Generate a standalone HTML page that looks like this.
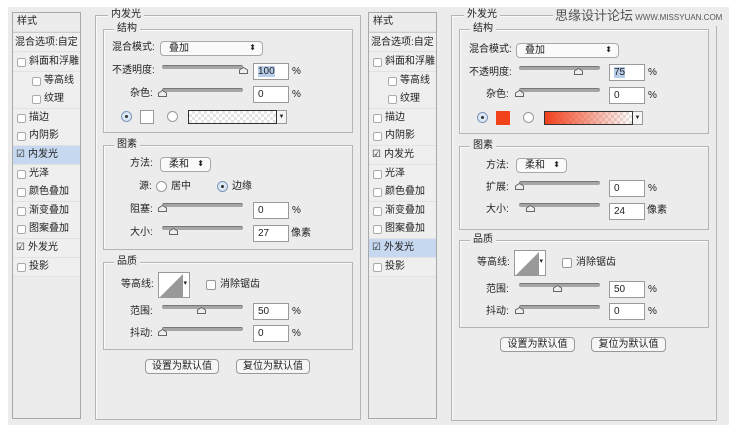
<!DOCTYPE html>
<html><head><meta charset="utf-8"><style>
*{margin:0;padding:0;box-sizing:border-box}
body{width:729px;height:433px;background:#fff;position:relative;overflow:hidden;font-family:"Liberation Sans","Noto Sans CJK SC",sans-serif;font-size:10px;color:#222}
.bg{position:absolute;left:8px;top:7px;width:721px;height:418px;background:#ececec}
.a{position:absolute}
.t{position:absolute;line-height:12px;white-space:nowrap;font-size:10px}
.side{position:absolute;border:1px solid #a9a9a9;background:#ececec}
.row{position:absolute;left:0;width:100%;height:19px;border-bottom:1px solid #e2e2e2;background:#efefef}
.row span{position:absolute;top:3px;line-height:12px}
.cb{position:absolute;width:9px;height:9px;border:1px solid #aaa;border-radius:2px;background:#fff;top:5px}
.hl{background:#c6d9f0}
.grp{position:absolute;border:1px solid #b5b5b5;box-shadow:inset 1px 1px 0 #fafafa}
.lab{position:absolute;top:-7px;background:#ececec;padding:0 3px;line-height:12px}
.inp{position:absolute;width:36px;height:17px;background:#fff;border:1px solid #9a9a9a;padding:2px 4px;line-height:12px;font-size:10px}
.sl{position:absolute;height:4px;border-radius:2px;background:#a5a5a5;border-top:1px solid #777}
.th{position:absolute;width:9px;height:7px}
.sel{position:absolute;height:15px;background:#fafafa;border:1px solid #a8a8a8;border-radius:4px;padding:1px 8px;line-height:12px}
.sel b{position:absolute;right:6px;top:0;font-weight:normal;font-size:8px}
.rad{position:absolute;width:11px;height:11px;border:1px solid #999;border-radius:50%;background:#fff}
.rad.on::after{content:"";position:absolute;left:3px;top:3px;width:3px;height:3px;border-radius:50%;background:#333}
.rad.on{background:#dde8f6;border-color:#7b95b8}
.btn{position:absolute;height:15px;border:1px solid #999;border-radius:4px;background:#f6f6f6;text-align:center;line-height:13px}
.cont{position:absolute;border:1px solid #999;background:#fff}
</style></head><body>
<div class="bg"></div>

<!-- LEFT SIDEBAR -->
<div class="side" style="left:12px;top:12px;width:69px;height:407px">
 <div class="row" style="top:0;height:19px;background:#ececec"><span style="left:4px">样式</span></div>
 <div class="row" style="top:19px;height:20px;border-top:1px solid #ccc"><span style="left:2px;top:4px">混合选项:自定</span></div>
 <div class="row" style="top:40px"><i class="cb" style="left:4px"></i><span style="left:16px">斜面和浮雕</span></div>
 <div class="row" style="top:59px"><i class="cb" style="left:19px"></i><span style="left:31px">等高线</span></div>
 <div class="row" style="top:77px"><i class="cb" style="left:19px"></i><span style="left:31px">纹理</span></div>
 <div class="row" style="top:96px"><i class="cb" style="left:4px"></i><span style="left:16px">描边</span></div>
 <div class="row" style="top:114px"><i class="cb" style="left:4px"></i><span style="left:16px">内阴影</span></div>
 <div class="row hl" style="top:133px"><span style="left:3px">☑</span><span style="left:15px">内发光</span></div>
 <div class="row" style="top:152px"><i class="cb" style="left:4px"></i><span style="left:16px">光泽</span></div>
 <div class="row" style="top:170px"><i class="cb" style="left:4px"></i><span style="left:16px">颜色叠加</span></div>
 <div class="row" style="top:189px"><i class="cb" style="left:4px"></i><span style="left:16px">渐变叠加</span></div>
 <div class="row" style="top:207px"><i class="cb" style="left:4px"></i><span style="left:16px">图案叠加</span></div>
 <div class="row" style="top:226px"><span style="left:3px">☑</span><span style="left:15px">外发光</span></div>
 <div class="row" style="top:245px"><i class="cb" style="left:4px"></i><span style="left:16px">投影</span></div>
</div>

<!-- LEFT MAIN -->
<div class="grp" style="left:95px;top:15px;width:266px;height:405px"><span class="lab" style="left:12px">内发光</span></div>
<div class="grp" style="left:103px;top:29px;width:250px;height:104px"><span class="lab" style="left:10px">结构</span></div>
<span class="t" style="left:112px;top:42px">混合模式:</span>
<div class="sel" style="left:160px;top:41px;width:103px">叠加<b>⬍</b></div>
<span class="t" style="left:112px;top:65px">不透明度:</span>
<div class="sl" style="left:162px;top:65px;width:81px"></div>
<svg class="th" style="left:239px;top:67px" viewBox="0 0 9 7"><path d="M.5 6.5V3L4.5.5 8.5 3v3.5z" fill="#eee" stroke="#666"/></svg>
<div class="inp" style="left:253px;top:63px"><span style="background:#b7cdea">100</span></div><span class="t" style="left:292px;top:66px">%</span>
<span class="t" style="left:130px;top:88px">杂色:</span>
<div class="sl" style="left:162px;top:88px;width:81px"></div>
<svg class="th" style="left:158px;top:90px" viewBox="0 0 9 7"><path d="M.5 6.5V3L4.5.5 8.5 3v3.5z" fill="#eee" stroke="#666"/></svg>
<div class="inp" style="left:253px;top:86px">0</div><span class="t" style="left:292px;top:89px">%</span>
<div class="rad on" style="left:121px;top:111px"></div>
<div class="a" style="left:140px;top:110px;width:14px;height:14px;background:#fff;border:1px solid #999"></div>
<div class="rad" style="left:167px;top:111px"></div>
<div class="a" style="left:188px;top:110px;width:89px;height:14px;border:1px solid #333;background:repeating-conic-gradient(#e4e4e4 0 25%,#fff 0 50%) 0 0/6px 6px"></div>
<div class="a" style="left:277px;top:110px;width:10px;height:14px;border:1px solid #999;border-left:0;background:#f5f5f5;font-size:6px;text-align:center;line-height:12px">▼</div>

<div class="grp" style="left:103px;top:145px;width:250px;height:105px"><span class="lab" style="left:10px">图素</span></div>
<span class="t" style="left:130px;top:158px">方法:</span>
<div class="sel" style="left:160px;top:157px;width:51px">柔和<b>⬍</b></div>
<span class="t" style="left:139px;top:181px">源:</span>
<div class="rad" style="left:156px;top:181px"></div><span class="t" style="left:171px;top:181px">居中</span>
<div class="rad on" style="left:217px;top:181px"></div><span class="t" style="left:232px;top:181px">边缘</span>
<span class="t" style="left:130px;top:204px">阻塞:</span>
<div class="sl" style="left:162px;top:203px;width:81px"></div>
<svg class="th" style="left:158px;top:205px" viewBox="0 0 9 7"><path d="M.5 6.5V3L4.5.5 8.5 3v3.5z" fill="#eee" stroke="#666"/></svg>
<div class="inp" style="left:253px;top:202px">0</div><span class="t" style="left:292px;top:205px">%</span>
<span class="t" style="left:130px;top:227px">大小:</span>
<div class="sl" style="left:162px;top:226px;width:81px"></div>
<svg class="th" style="left:169px;top:228px" viewBox="0 0 9 7"><path d="M.5 6.5V3L4.5.5 8.5 3v3.5z" fill="#eee" stroke="#666"/></svg>
<div class="inp" style="left:253px;top:225px">27</div><span class="t" style="left:291px;top:228px">像素</span>

<div class="grp" style="left:103px;top:262px;width:250px;height:88px"><span class="lab" style="left:10px">品质</span></div>
<span class="t" style="left:121px;top:279px">等高线:</span>
<div class="cont" style="left:158px;top:272px;width:32px;height:26px"><svg width="24" height="24" style="position:absolute;left:0;top:0"><path d="M1 24L24 1V24z" fill="#999"/></svg><span style="position:absolute;right:2px;top:6px;font-size:7px">▾</span></div>
<div class="a" style="left:206px;top:280px;width:10px;height:10px;border:1px solid #999;border-radius:2px;background:#fff"></div>
<span class="t" style="left:220px;top:279px">消除锯齿</span>
<span class="t" style="left:130px;top:306px">范围:</span>
<div class="sl" style="left:162px;top:305px;width:81px"></div>
<svg class="th" style="left:197px;top:307px" viewBox="0 0 9 7"><path d="M.5 6.5V3L4.5.5 8.5 3v3.5z" fill="#eee" stroke="#666"/></svg>
<div class="inp" style="left:253px;top:303px">50</div><span class="t" style="left:292px;top:306px">%</span>
<span class="t" style="left:130px;top:328px">抖动:</span>
<div class="sl" style="left:162px;top:327px;width:81px"></div>
<svg class="th" style="left:158px;top:329px" viewBox="0 0 9 7"><path d="M.5 6.5V3L4.5.5 8.5 3v3.5z" fill="#eee" stroke="#666"/></svg>
<div class="inp" style="left:253px;top:325px">0</div><span class="t" style="left:292px;top:328px">%</span>
<div class="btn" style="left:145px;top:359px;width:74px">设置为默认值</div>
<div class="btn" style="left:236px;top:359px;width:74px">复位为默认值</div>

<!-- RIGHT SIDEBAR -->
<div class="side" style="left:368px;top:12px;width:69px;height:407px">
 <div class="row" style="top:0;height:19px;background:#ececec"><span style="left:4px">样式</span></div>
 <div class="row" style="top:19px;height:20px;border-top:1px solid #ccc"><span style="left:2px;top:4px">混合选项:自定</span></div>
 <div class="row" style="top:40px"><i class="cb" style="left:4px"></i><span style="left:16px">斜面和浮雕</span></div>
 <div class="row" style="top:59px"><i class="cb" style="left:19px"></i><span style="left:31px">等高线</span></div>
 <div class="row" style="top:77px"><i class="cb" style="left:19px"></i><span style="left:31px">纹理</span></div>
 <div class="row" style="top:96px"><i class="cb" style="left:4px"></i><span style="left:16px">描边</span></div>
 <div class="row" style="top:114px"><i class="cb" style="left:4px"></i><span style="left:16px">内阴影</span></div>
 <div class="row" style="top:133px"><span style="left:3px">☑</span><span style="left:15px">内发光</span></div>
 <div class="row" style="top:152px"><i class="cb" style="left:4px"></i><span style="left:16px">光泽</span></div>
 <div class="row" style="top:170px"><i class="cb" style="left:4px"></i><span style="left:16px">颜色叠加</span></div>
 <div class="row" style="top:189px"><i class="cb" style="left:4px"></i><span style="left:16px">渐变叠加</span></div>
 <div class="row" style="top:207px"><i class="cb" style="left:4px"></i><span style="left:16px">图案叠加</span></div>
 <div class="row hl" style="top:226px"><span style="left:3px">☑</span><span style="left:15px">外发光</span></div>
 <div class="row" style="top:245px"><i class="cb" style="left:4px"></i><span style="left:16px">投影</span></div>
</div>

<!-- RIGHT MAIN -->
<div class="grp" style="left:451px;top:15px;width:266px;height:406px"><span class="lab" style="left:12px">外发光</span></div>
<span class="t" style="left:553px;top:8px;font-size:13px;line-height:16px;color:#555;background:#ececec;padding:0 2px">思缘设计论坛<span style="font-size:8px;color:#555"> WWW.MISSYUAN.COM</span></span>
<div class="grp" style="left:459px;top:29px;width:250px;height:105px"><span class="lab" style="left:10px">结构</span></div>
<span class="t" style="left:469px;top:44px">混合模式:</span>
<div class="sel" style="left:516px;top:43px;width:103px">叠加<b>⬍</b></div>
<span class="t" style="left:469px;top:67px">不透明度:</span>
<div class="sl" style="left:519px;top:66px;width:81px"></div>
<svg class="th" style="left:574px;top:68px" viewBox="0 0 9 7"><path d="M.5 6.5V3L4.5.5 8.5 3v3.5z" fill="#eee" stroke="#666"/></svg>
<div class="inp" style="left:609px;top:64px"><span style="background:#b7cdea">75</span></div><span class="t" style="left:648px;top:67px">%</span>
<span class="t" style="left:486px;top:89px">杂色:</span>
<div class="sl" style="left:519px;top:88px;width:81px"></div>
<svg class="th" style="left:515px;top:90px" viewBox="0 0 9 7"><path d="M.5 6.5V3L4.5.5 8.5 3v3.5z" fill="#eee" stroke="#666"/></svg>
<div class="inp" style="left:609px;top:87px">0</div><span class="t" style="left:648px;top:90px">%</span>
<div class="rad on" style="left:477px;top:112px"></div>
<div class="a" style="left:496px;top:111px;width:14px;height:14px;background:#f2421a"></div>
<div class="rad" style="left:523px;top:112px"></div>
<div class="a" style="left:544px;top:111px;width:89px;height:14px;border:1px solid #333;background:linear-gradient(90deg,#f0401c,rgba(240,64,28,0)),repeating-conic-gradient(#e4e4e4 0 25%,#fff 0 50%) 0 0/6px 6px"></div>
<div class="a" style="left:633px;top:111px;width:10px;height:14px;border:1px solid #999;border-left:0;background:#f5f5f5;font-size:6px;text-align:center;line-height:12px">▼</div>

<div class="grp" style="left:459px;top:146px;width:250px;height:84px"><span class="lab" style="left:10px">图素</span></div>
<span class="t" style="left:486px;top:160px">方法:</span>
<div class="sel" style="left:516px;top:158px;width:51px">柔和<b>⬍</b></div>
<span class="t" style="left:486px;top:182px">扩展:</span>
<div class="sl" style="left:519px;top:181px;width:81px"></div>
<svg class="th" style="left:515px;top:183px" viewBox="0 0 9 7"><path d="M.5 6.5V3L4.5.5 8.5 3v3.5z" fill="#eee" stroke="#666"/></svg>
<div class="inp" style="left:609px;top:180px">0</div><span class="t" style="left:648px;top:183px">%</span>
<span class="t" style="left:486px;top:204px">大小:</span>
<div class="sl" style="left:519px;top:203px;width:81px"></div>
<svg class="th" style="left:526px;top:205px" viewBox="0 0 9 7"><path d="M.5 6.5V3L4.5.5 8.5 3v3.5z" fill="#eee" stroke="#666"/></svg>
<div class="inp" style="left:609px;top:203px">24</div><span class="t" style="left:647px;top:205px">像素</span>

<div class="grp" style="left:459px;top:240px;width:250px;height:88px"><span class="lab" style="left:10px">品质</span></div>
<span class="t" style="left:477px;top:257px">等高线:</span>
<div class="cont" style="left:514px;top:250px;width:32px;height:26px"><svg width="24" height="24" style="position:absolute;left:0;top:0"><path d="M1 24L24 1V24z" fill="#999"/></svg><span style="position:absolute;right:2px;top:6px;font-size:7px">▾</span></div>
<div class="a" style="left:562px;top:258px;width:10px;height:10px;border:1px solid #999;border-radius:2px;background:#fff"></div>
<span class="t" style="left:576px;top:257px">消除锯齿</span>
<span class="t" style="left:486px;top:284px">范围:</span>
<div class="sl" style="left:519px;top:283px;width:81px"></div>
<svg class="th" style="left:553px;top:285px" viewBox="0 0 9 7"><path d="M.5 6.5V3L4.5.5 8.5 3v3.5z" fill="#eee" stroke="#666"/></svg>
<div class="inp" style="left:609px;top:281px">50</div><span class="t" style="left:648px;top:284px">%</span>
<span class="t" style="left:486px;top:306px">抖动:</span>
<div class="sl" style="left:519px;top:305px;width:81px"></div>
<svg class="th" style="left:515px;top:307px" viewBox="0 0 9 7"><path d="M.5 6.5V3L4.5.5 8.5 3v3.5z" fill="#eee" stroke="#666"/></svg>
<div class="inp" style="left:609px;top:303px">0</div><span class="t" style="left:648px;top:306px">%</span>
<div class="btn" style="left:500px;top:337px;width:75px">设置为默认值</div>
<div class="btn" style="left:591px;top:337px;width:75px">复位为默认值</div>
</body></html>
